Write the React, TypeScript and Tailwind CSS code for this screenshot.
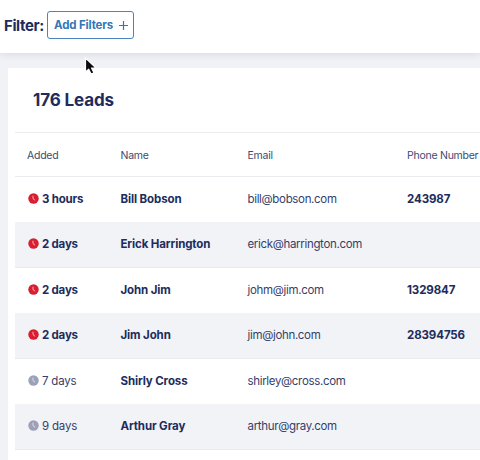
type Lead = {
  added: string;
  name: string;
  email: string;
  phone?: string;
  recent?: boolean;
};

const leads: Lead[] = [
  { added: "3 hours", name: "Bill Bobson", email: "bill@bobson.com", phone: "243987", recent: true },
  { added: "2 days", name: "Erick Harrington", email: "erick@harrington.com", recent: true },
  { added: "2 days", name: "John Jim", email: "johm@jim.com", phone: "1329847", recent: true },
  { added: "2 days", name: "Jim John", email: "jim@john.com", phone: "28394756", recent: true },
  { added: "7 days", name: "Shirly Cross", email: "shirley@cross.com" },
  { added: "9 days", name: "Arthur Gray", email: "arthur@gray.com" },
];

const columns = "grid grid-cols-[93.5px_127px_159.5px_1fr] items-center pl-3";

function ClockIcon({ className }: { className: string }) {
  return (
    <svg viewBox="0 0 11 11" className={`mb-px h-[11px] w-[11px] shrink-0 ${className}`}>
      <circle cx="5.5" cy="5.5" r="5.2" fill="currentColor" />
      <path d="M5 2.7v2.9l2.1 1.7" fill="none" stroke="white" strokeWidth="0.9" strokeOpacity="0.75" />
    </svg>
  );
}

function Cursor() {
  return (
    <svg viewBox="0 0 14 20" className="absolute left-[84px] top-[56px] h-5 w-3.5">
      <path
        d="M1.5 2v14l3.2-2.8 2.4 4.9 2.9-1.4-2.4-4.6h4.5z"
        fill="#0b0b0d"
        stroke="white"
        strokeWidth="1.2"
        strokeLinejoin="round"
      />
    </svg>
  );
}

function LeadRow({ lead, striped }: { lead: Lead; striped: boolean }) {
  return (
    <div
      className={`${columns} text-[11.5px] ${striped ? "h-[46.5px] border-b border-[#e9eaee] bg-[#f2f3f7]" : "h-[44.5px]"}`}
    >
      <div className="flex items-center pl-[0.5px]">
        <ClockIcon className={lead.recent ? "text-[#d91e30]" : "text-[#9da1b8]"} />
        <span className={`ml-[3.5px] ${lead.recent ? "font-bold tracking-[-0.2px]" : "tracking-[-0.2px] text-[#36406a]"}`}>
          {lead.added}
        </span>
      </div>
      <div className="font-bold tracking-[-0.12px]">{lead.name}</div>
      <div className="tracking-[-0.33px] text-[#36406a]">{lead.email}</div>
      <div className="font-bold tracking-[-0.1px]">{lead.phone}</div>
    </div>
  );
}

export default function App() {
  return (
    <div className="relative flex h-[460px] w-[480px] flex-col overflow-hidden whitespace-nowrap bg-[#f1f2f6] font-['Inter',sans-serif] text-[#202c5c]">
      <header className="flex h-[53px] shrink-0 items-start bg-white pl-1 pt-[11px] shadow-[0_1px_8px_rgba(40,45,70,0.12)]">
        <span className="w-[43px] pt-px text-[15px] font-bold leading-[28px] tracking-[-0.4px]">Filter:</span>
        <button className="flex h-7 w-[87px] items-center justify-between rounded-[3px] border border-[#4b84be] pl-1.5 pr-[5px] pt-px text-[11.5px] font-bold tracking-[-0.15px] text-[#3476b6]">
          <span>Add Filters</span>
          <svg viewBox="0 0 9 9" className="h-[9px] w-[9px]" stroke="currentColor" strokeWidth="1.2">
            <path d="M4.5 0v9M0 4.5h9" />
          </svg>
        </button>
      </header>

      <main className="ml-2 mt-[15px] flex-1 bg-white pl-[7px]">
        <h1 className="flex h-16 items-center pl-[18px] pt-px text-[17px] font-bold tracking-[-0.12px]">176 Leads</h1>
        <div className={`${columns} h-[45px] border-y border-[#ebecf0] pt-[3px] text-[10.5px] tracking-[-0.25px] text-[#404a72]`}>
          <span>Added</span>
          <span>Name</span>
          <span>Email</span>
          <span>Phone Number</span>
        </div>
        {leads.map((lead, i) => (
          <LeadRow key={lead.email} lead={lead} striped={i % 2 === 1} />
        ))}
      </main>
      <Cursor />
    </div>
  );
}
